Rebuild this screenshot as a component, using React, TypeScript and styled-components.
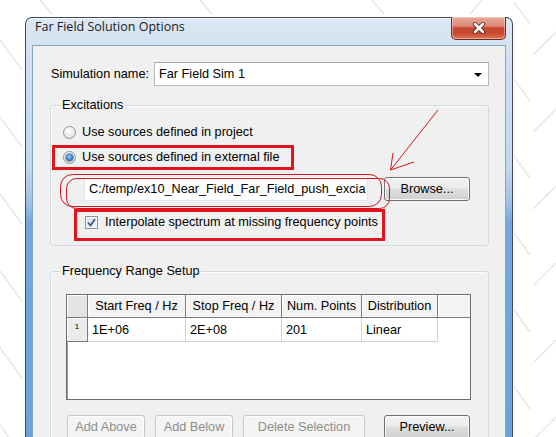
import React from "react";
import styled, { createGlobalStyle } from "styled-components";

const GlobalStyle = createGlobalStyle`
  html, body { margin: 0; padding: 0; background: #ffffff; }
  body { width: 556px; height: 437px; overflow: hidden; }
  * { box-sizing: border-box; }
`;

const UI_FONT = `"Liberation Sans", Arial, sans-serif`;

const Page = styled.div`
  position: relative;
  width: 556px;
  height: 437px;
  overflow: hidden;
  padding: 17px 0 0 25px;
  background: #ffffff;
  font-family: ${UI_FONT};
  font-size: 12.7px;
  color: #000;
`;

const BgLines = styled.svg`
  position: absolute;
  left: 0;
  top: 0;
  z-index: 0;
`;

const Overlay = styled.svg`
  position: absolute;
  left: 0;
  top: 0;
  z-index: 3;
  pointer-events: none;
`;

const Window = styled.div`
  position: relative;
  z-index: 1;
  width: 488px;
  height: 440px;
  border: 1px solid #3e4a58;
  border-bottom: none;
  border-radius: 7px 7px 0 0;
  padding: 0 6px;
  display: flex;
  flex-direction: column;
  background: linear-gradient(
    to bottom,
    #dbe7f4 0px,
    #cddeef 60px,
    #c3d6ec 150px,
    #9fc1e6 185px,
    #72a7de 205px,
    #6aa2dc 100%
  );
  box-shadow: inset 0 1px 0 rgba(255, 255, 255, 0.8);
`;

const TitleBar = styled.div`
  position: relative;
  height: 41px;
  padding: 0 0 10px 3px;
  display: flex;
  align-items: center;
  font-family: "Open Sans", "Noto Sans", sans-serif;
  font-size: 12.5px;
  color: #1a1a1a;
`;

const CloseButton = styled.div`
  position: absolute;
  top: -1px;
  right: 0;
  width: 55px;
  height: 23px;
  border: 1px solid #6b2e24;
  border-top: none;
  border-radius: 0 0 5px 5px;
  background: linear-gradient(
    to bottom,
    #e9aa9c 0%,
    #dc8a76 40%,
    #c7462f 50%,
    #c84a31 75%,
    #dd7655 100%
  );
  box-shadow: inset 0 0 0 1px rgba(255, 220, 210, 0.5);
  display: flex;
  align-items: center;
  justify-content: center;
`;

const Client = styled.div`
  position: relative;
  flex: 1;
  background: #f0f0f0;
  border: 1px solid #8fa3ba;
  border-bottom: none;
  padding: 16px 16px 0 17px;
  display: flex;
  flex-direction: column;
`;

const SimRow = styled.div`
  display: flex;
  align-items: center;
  height: 24px;
  padding-left: 1px;
`;

const Label = styled.span<{ $w?: number }>`
  width: ${(p) => (p.$w ? `${p.$w}px` : "auto")};
  flex: none;
  white-space: nowrap;
`;

const Combo = styled.div`
  position: relative;
  width: 336px;
  height: 24px;
  background: #fff;
  border: 1px solid #b5b8bd;
  border-top-color: #a5a9ae;
  display: flex;
  align-items: center;
  padding-left: 4px;
`;

const ComboArrow = styled.span`
  position: absolute;
  right: 6px;
  top: 10px;
  width: 0;
  height: 0;
  border-left: 4px solid transparent;
  border-right: 4px solid transparent;
  border-top: 4px solid #000;
`;

const Group = styled.fieldset<{ $top: number; $pb: number }>`
  margin: ${(p) => p.$top}px 0 0 0;
  padding: 0 0 ${(p) => p.$pb}px 0;
  min-width: 0;
  border: 1px solid #d5dadf;
  border-radius: 3px;
  box-shadow: inset 1px 1px 0 #fbfbfb;
  display: flex;
  flex-direction: column;
`;

const Legend = styled.legend`
  margin-left: 10px;
  padding: 0 1px;
  line-height: 15px;
  font-size: 12.7px;
`;

const OptionRow = styled.div<{ $mt: number; $ml: number; $gap: number; $h?: number }>`
  display: flex;
  align-items: center;
  height: ${(p) => p.$h ?? 20}px;
  margin-top: ${(p) => p.$mt}px;
  margin-left: ${(p) => p.$ml}px;
  gap: ${(p) => p.$gap}px;
`;

const Radio = styled.span<{ $checked?: boolean }>`
  position: relative;
  width: 13px;
  height: 13px;
  flex: none;
  border-radius: 50%;
  border: 1px solid #8f9397;
  background: radial-gradient(circle at 40% 35%, #ffffff 0%, #eef0f2 45%, #d2d5d8 100%);
  &::after {
    content: "";
    display: ${(p) => (p.$checked ? "block" : "none")};
    position: absolute;
    left: 2px;
    top: 2px;
    width: 7px;
    height: 7px;
    border-radius: 50%;
    background: radial-gradient(circle at 45% 40%, #9fd6ff 0%, #3f8fd2 45%, #12457a 100%);
    box-shadow: 0 0 0 0.5px #1c3d63;
  }
`;

const CheckBox = styled.span`
  width: 13px;
  height: 13px;
  flex: none;
  border: 1px solid #8f9397;
  background: linear-gradient(135deg, #d9dee4 0%, #f4f5f7 100%);
  box-shadow: inset 0 0 0 1px #f6f7f8;
  display: flex;
  align-items: center;
  justify-content: center;
`;

const TextBox = styled.div`
  width: 284px;
  height: 25px;
  background: #fff;
  border: 1px solid #e3e6ea;
  display: flex;
  align-items: center;
  padding-left: 4px;
  overflow: hidden;
  white-space: nowrap;
`;

const Button = styled.div<{ $w: number; $disabled?: boolean; $ml?: number }>`
  width: ${(p) => p.$w}px;
  height: 24px;
  flex: none;
  margin-left: ${(p) => p.$ml ?? 0}px;
  border-radius: 3px;
  border: 1px solid ${(p) => (p.$disabled ? "#c3c6c9" : "#707070")};
  background: ${(p) =>
    p.$disabled
      ? "#f4f4f4"
      : "linear-gradient(to bottom, #f3f3f3 0%, #ececec 45%, #dedede 50%, #d0d0d0 100%)"};
  box-shadow: inset 0 0 0 1px rgba(255, 255, 255, 0.85);
  color: ${(p) => (p.$disabled ? "#8d8d8d" : "#000")};
  display: flex;
  align-items: center;
  justify-content: center;
  white-space: nowrap;
`;

const Table = styled.div`
  margin: 15px 0 0 15px;
  width: 405px;
  height: 106px;
  border: 1px solid #6d6d6d;
  box-shadow: inset 1px 1px 0 #9a9a9a;
  background: #fff;
  display: grid;
  grid-template-columns: 21px 98px 96px 80px 76px 1fr;
  grid-template-rows: 23px 24px;
  align-content: start;
`;

const HeadCell = styled.div<{ $corner?: boolean; $last?: boolean }>`
  background: ${(p) => (p.$corner ? "#e4e4e4" : "#f3f3f3")};
  border-right: ${(p) => (p.$last ? "none" : "1px solid #7c7c7c")};
  border-bottom: 1px solid #7c7c7c;
  box-shadow: inset 1px 1px 0 #ffffff;
  display: flex;
  align-items: center;
  justify-content: center;
  white-space: nowrap;
`;

const RowHead = styled.div`
  background: #ebebeb;
  border-right: 1px solid #7c7c7c;
  border-bottom: 1px solid #7c7c7c;
  box-shadow: inset 1px 1px 0 #ffffff;
  font-size: 8px;
  display: flex;
  justify-content: center;
  padding-top: 4px;
`;

const Cell = styled.div<{ $empty?: boolean }>`
  border-right: ${(p) => (p.$empty ? "none" : "1px solid #d3d3d3")};
  border-bottom: ${(p) => (p.$empty ? "none" : "1px solid #d3d3d3")};
  display: flex;
  align-items: center;
  padding-left: 4px;
  white-space: nowrap;
`;

const ButtonRow = styled.div`
  display: flex;
  margin: 15px 0 0 16px;
  gap: 10px;
`;

function Background() {
  const lines: React.ReactNode[] = [];
  for (let k = 0; k < 6; k++) {
    const y = 77 * k;
    lines.push(<line key={`rb${k}`} x1={514} y1={y + 2} x2={530} y2={y + 24} />);
    lines.push(<line key={`rf${k}`} x1={533} y1={y + 55} x2={556} y2={y + 32} />);
    lines.push(<line key={`lb${k}`} x1={0} y1={y + 40} x2={22} y2={y + 70} />);
  }
  lines.push(<line key="t1" x1={40} y1={0} x2={52} y2={14} />);
  lines.push(<line key="t2" x1={200} y1={0} x2={212} y2={14} />);
  lines.push(<line key="t3" x1={372} y1={0} x2={384} y2={14} />);
  lines.push(<line key="t4" x1={470} y1={14} x2={482} y2={0} />);
  return (
    <BgLines width={556} height={437} stroke="#e4e4e4" strokeWidth={1.3}>
      {lines}
    </BgLines>
  );
}

function Annotations() {
  return (
    <Overlay width={556} height={437} fill="none">
      <rect x={53.5} y={146.5} width={239} height={22} stroke="#e0141c" strokeWidth={3} />
      <rect x={75.5} y={210.5} width={308} height={29} stroke="#e0141c" strokeWidth={3} />
      <rect x={60.5} y={174.5} width={321} height={32} rx={12} stroke="#d0141c" strokeWidth={1} />
      <rect x={66.5} y={178.5} width={323} height={30} rx={10} stroke="#d0141c" strokeWidth={1} />
      <g stroke="#d8141c" strokeWidth={1}>
        <line x1={438} y1={110} x2={390.5} y2={170} />
        <line x1={390.5} y1={170} x2={393} y2={153} />
        <line x1={390.5} y1={170} x2={414} y2={162} />
      </g>
    </Overlay>
  );
}

export default function App() {
  return (
    <Page>
      <GlobalStyle />
      <Background />
      <Window>
        <TitleBar>
          Far Field Solution Options
          <CloseButton>
            <svg width={16} height={12} viewBox="0 0 16 12">
              <path d="M4 2 L12 10 M12 2 L4 10" stroke="#5a2018" strokeWidth={4.2} strokeLinecap="round" />
              <path d="M4 2 L12 10 M12 2 L4 10" stroke="#ffffff" strokeWidth={2.6} strokeLinecap="round" />
            </svg>
          </CloseButton>
        </TitleBar>
        <Client>
          <SimRow>
            <Label $w={103}>Simulation name:</Label>
            <Combo>
              Far Field Sim 1
              <ComboArrow />
            </Combo>
          </SimRow>

          <Group $top={12} $pb={13}>
            <Legend>Excitations</Legend>
            <OptionRow $mt={9} $ml={12} $gap={6}>
              <Radio />
              <Label>Use sources defined in project</Label>
            </OptionRow>
            <OptionRow $mt={5} $ml={12} $gap={6}>
              <Radio $checked />
              <Label>Use sources defined in external file</Label>
            </OptionRow>
            <OptionRow $mt={9} $ml={33} $gap={16} $h={25}>
              <TextBox>C:/temp/ex10_Near_Field_Far_Field_push_excia</TextBox>
              <Button $w={86}>Browse...</Button>
            </OptionRow>
            <OptionRow $mt={11} $ml={34} $gap={7}>
              <CheckBox>
                <svg width={11} height={11} viewBox="0 0 11 11">
                  <path d="M2 5.5 L4.5 8.5 L9 2" stroke="#3d5a96" strokeWidth={1.8} fill="none" />
                </svg>
              </CheckBox>
              <Label>Interpolate spectrum at missing frequency points</Label>
            </OptionRow>
          </Group>

          <Group $top={18} $pb={20}>
            <Legend>Frequency Range Setup</Legend>
            <Table>
              <HeadCell $corner />
              <HeadCell>Start Freq / Hz</HeadCell>
              <HeadCell>Stop Freq / Hz</HeadCell>
              <HeadCell>Num. Points</HeadCell>
              <HeadCell>Distribution</HeadCell>
              <HeadCell $last />
              <RowHead>1</RowHead>
              <Cell>1E+06</Cell>
              <Cell>2E+08</Cell>
              <Cell>201</Cell>
              <Cell>Linear</Cell>
              <Cell $empty />
            </Table>
            <ButtonRow>
              <Button $w={78} $disabled>Add Above</Button>
              <Button $w={78} $disabled>Add Below</Button>
              <Button $w={122} $disabled>Delete Selection</Button>
              <Button $w={86} $ml={9}>Preview...</Button>
            </ButtonRow>
          </Group>
        </Client>
      </Window>
      <Annotations />
    </Page>
  );
}
